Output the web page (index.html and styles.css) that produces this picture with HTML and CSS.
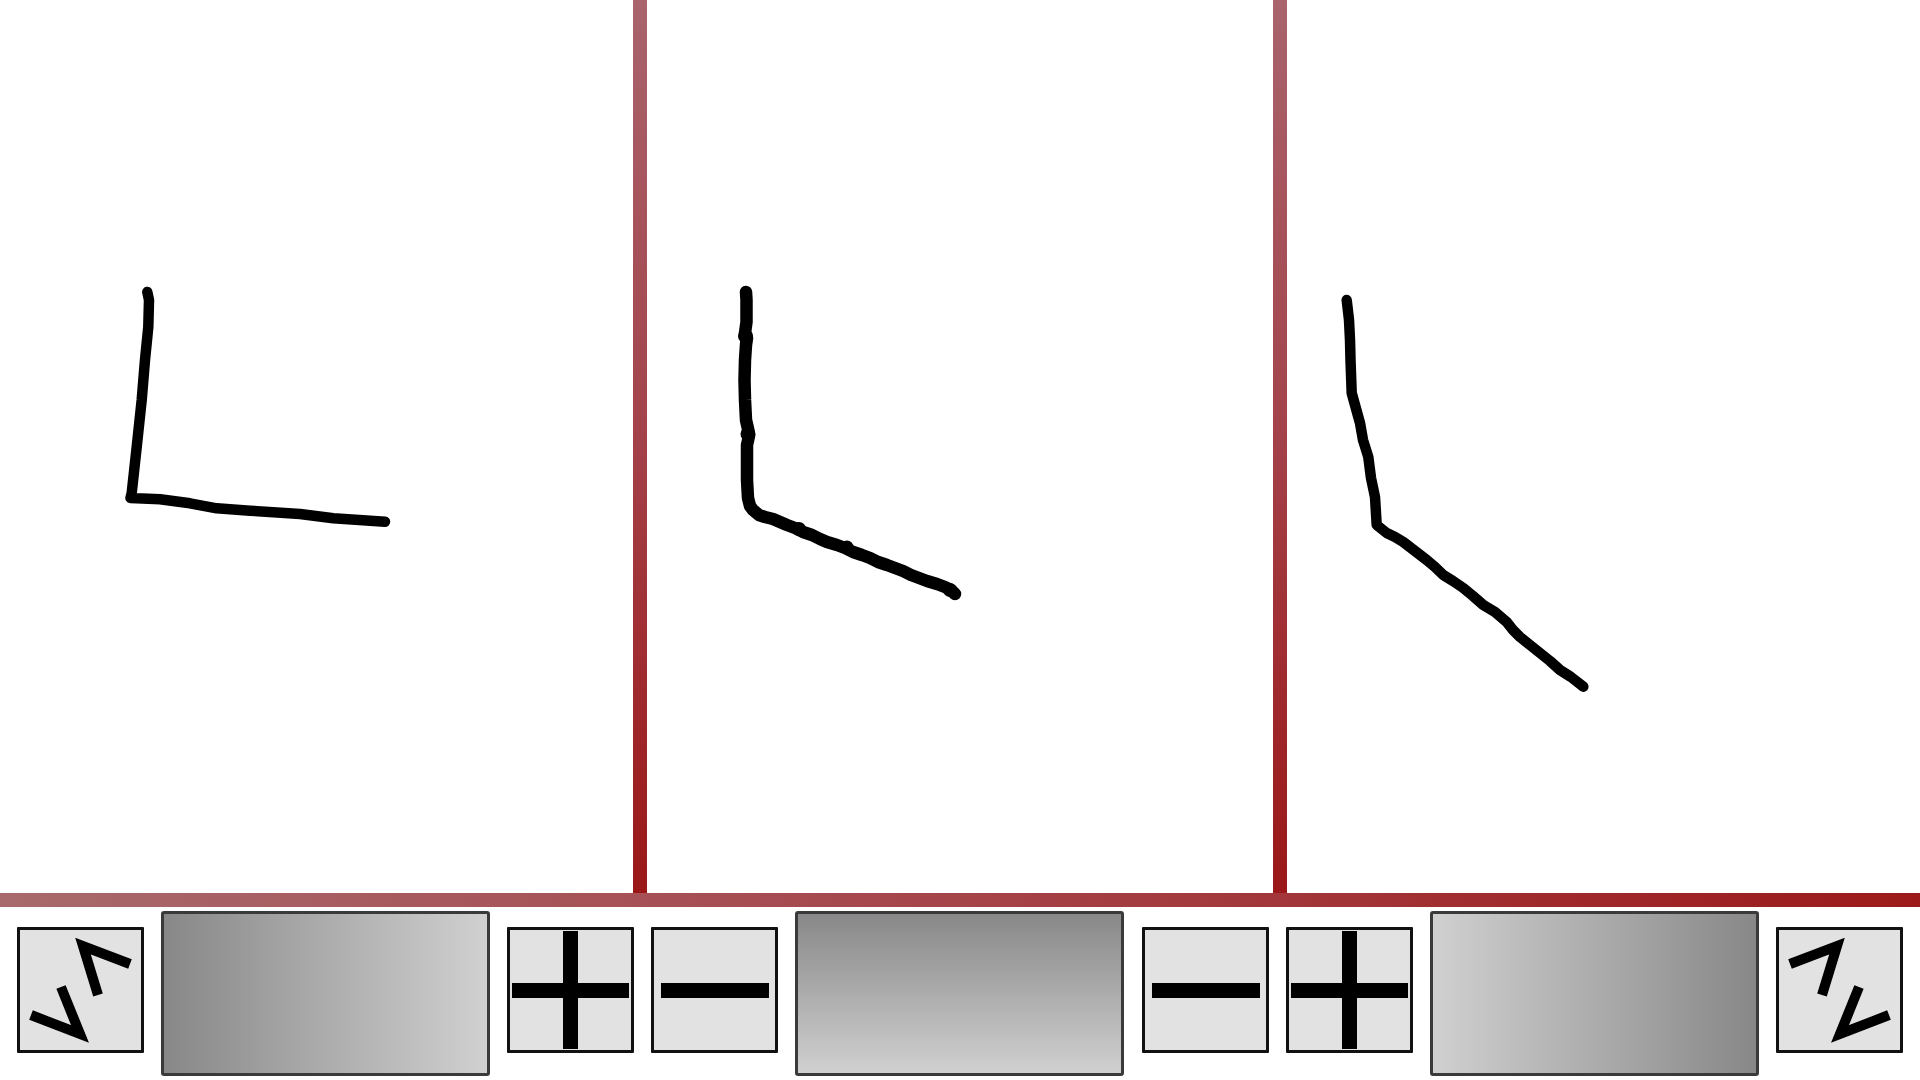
FILE: index.html
```html
<!DOCTYPE html>
<html lang="en">
<head>
<meta charset="utf-8">
<title>Sketch panels</title>
<link rel="stylesheet" href="styles.css">
</head>
<body>
<div class="app">
  <div class="canvas">
    <div class="panel panel-side">
      <svg class="ink" viewBox="0 0 633 893" preserveAspectRatio="none">
        <polyline class="stroke" points="147.3,292 149,300 148.3,327 145,360 141.7,400 136.7,447 131.7,493 130.5,498 160,499.3 190,503.3 216.7,508.3 250,510.7 300,514 333.3,518.3 385,521.7"/>
      </svg>
    </div>
    <div class="divider"></div>
    <div class="panel panel-mid">
      <svg class="ink" viewBox="0 0 626 893" preserveAspectRatio="none">
        <polyline class="stroke thick" points="99,292 99.5,300 99.5,322 98,333 100,338 99,345 98,360 97.5,380 98,400 99,420 101.5,431 102,436 100,445 100,460 100,480 101,498 103,506 106,510 112,515 118,517 126,519 133,522 140,525 148,528 156,532 165,535 173,539 180,542 190,545 198,548 206,552 215,555 223,558 231,562 240,565 248,568 256,571 264,575 272,578 280,581 290,584 298,587 304,590 308,594"/>
        <circle class="blob" cx="98.5" cy="336" r="7.5"/>
        <circle class="blob" cx="101" cy="434" r="7.5"/>
        <circle class="blob" cx="152" cy="529" r="7"/>
        <circle class="blob" cx="200" cy="547" r="6.5"/>
        <circle class="blob" cx="303" cy="590" r="7"/>
      </svg>
    </div>
    <div class="divider"></div>
    <div class="panel panel-side">
      <svg class="ink" viewBox="0 0 633 893" preserveAspectRatio="none">
        <polyline class="stroke" points="59.7,300 62,320 63,340 63.5,360 64.7,393 68,405 73,423 76,440 81.3,457 84,478 88,497 89.7,525 99.7,533 108,537 116.3,542 128,551 139.7,560 148,567 156.3,575 166,581 176.3,588 186,596 196.3,605 208,612 219.7,622 226,630 233,637 243,645 253,653 263,661 273,670 284,677 296.3,686.7"/>
      </svg>
    </div>
  </div>
  <div class="rule"></div>
  <div class="toolbar">
    <div class="btn">
      <svg class="glyph" viewBox="3 3 121 120">
        <polyline class="chev" points="113,37 66,19 81,68"/>
        <polyline class="chev" points="44,60 63,107 14,88"/>
      </svg>
    </div>
    <div class="slider slider-ltr"></div>
    <div class="btn">
      <svg class="glyph" viewBox="3 3 121 120">
        <rect class="bar" x="56" y="4" width="15" height="118"/>
        <rect class="bar" x="5" y="56" width="117" height="15"/>
      </svg>
    </div>
    <div class="btn">
      <svg class="glyph" viewBox="3 3 121 120">
        <rect class="bar" x="10" y="56" width="108" height="15"/>
      </svg>
    </div>
    <div class="slider slider-ttb"></div>
    <div class="btn">
      <svg class="glyph" viewBox="3 3 121 120">
        <rect class="bar" x="10" y="56" width="108" height="15"/>
      </svg>
    </div>
    <div class="btn">
      <svg class="glyph" viewBox="3 3 121 120">
        <rect class="bar" x="56" y="4" width="15" height="118"/>
        <rect class="bar" x="5" y="56" width="117" height="15"/>
      </svg>
    </div>
    <div class="slider slider-rtl"></div>
    <div class="btn">
      <svg class="glyph" viewBox="3 3 121 120">
        <polyline class="chev" points="14,37 61,19 46,68"/>
        <polyline class="chev" points="83,60 64,107 113,88"/>
      </svg>
    </div>
  </div>
</div>
</body>
</html>
```
FILE: styles.css
```css
* {
  box-sizing: border-box;
}

html, body {
  margin: 0;
  padding: 0;
  background: #ffffff;
  font-family: "Liberation Sans", Arial, sans-serif;
}

.app {
  width: 1920px;
  height: 1080px;
  display: flex;
  flex-direction: column;
  overflow: hidden;
}

.canvas {
  height: 893px;
  display: flex;
  flex-direction: row;
}

.panel {
  height: 100%;
  background: #ffffff;
}

.panel-side {
  width: 633px;
}

.panel-mid {
  width: 626px;
}

.divider {
  width: 14px;
  height: 100%;
  background: linear-gradient(to bottom, #a9646c 0%, #a4454d 45%, #9b1717 100%);
}

.ink {
  display: block;
  width: 100%;
  height: 100%;
}

.stroke {
  fill: none;
  stroke: #000000;
  stroke-width: 10.5;
  stroke-linecap: round;
  stroke-linejoin: round;
}

.stroke.thick {
  stroke-width: 12.5;
}

.blob {
  fill: #000000;
}

.rule {
  height: 14px;
  background: linear-gradient(to right, #a86a6c 0%, #a6484e 45%, #9c1a1a 100%);
}

.toolbar {
  flex: 1;
  display: flex;
  flex-direction: row;
  justify-content: space-evenly;
  align-items: flex-start;
  padding-top: 4px;
}

.btn {
  width: 127px;
  height: 126px;
  margin-top: 16px;
  border: 3px solid #111111;
  border-radius: 1px;
  background: #e2e2e2;
}

.glyph {
  display: block;
  width: 121px;
  height: 120px;
}

.bar {
  fill: #000000;
}

.chev {
  fill: none;
  stroke: #000000;
  stroke-width: 10;
  stroke-linecap: butt;
  stroke-linejoin: miter;
}

.slider {
  width: 329px;
  height: 165px;
  border: 3px solid #3a3a3a;
  border-radius: 3px;
}

.slider-ltr {
  background: linear-gradient(to right, #888888 0%, #d0d0d0 100%);
}

.slider-ttb {
  background: linear-gradient(to bottom, #888888 0%, #d0d0d0 100%);
}

.slider-rtl {
  background: linear-gradient(to right, #d0d0d0 0%, #888888 100%);
}
```
